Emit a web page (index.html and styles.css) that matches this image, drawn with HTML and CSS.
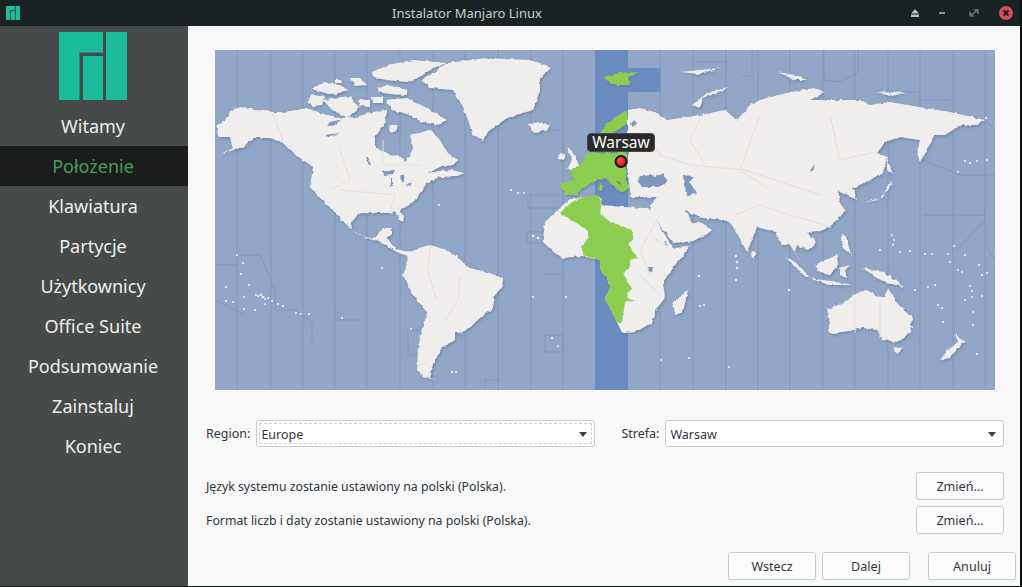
FILE: index.html
```html
<!DOCTYPE html>
<html lang="pl">
<head>
<meta charset="utf-8">
<title>Instalator Manjaro Linux</title>
<link rel="stylesheet" href="styles.css">
</head>
<body>
<div class="window">
  <header class="titlebar">
    <svg class="app-icon" viewBox="0 0 68 68"><path class="teal" d="M0 0H44V20.500H20.500V68H0ZM24 24H44V68H24ZM47 0H68V68H47Z"/></svg>
    <div class="title">Instalator Manjaro Linux</div>
    <div class="controls">
      <svg class="ctl" viewBox="0 0 24 24"><path class="eject" d="M12 8l4 4.500H8zM8 13.500h8V16H8z"/></svg>
      <svg class="ctl" viewBox="0 0 24 24"><path class="minim" d="M9 11h6v2H9z"/></svg>
      <svg class="ctl" viewBox="0 0 24 24"><path class="maxim" d="M13 9h3v3zM11 15H8v-3zM9.500 14.500l5-5" /></svg>
      <svg class="ctl" viewBox="0 0 24 24"><circle class="close-bg" cx="12" cy="12" r="7"/><path class="close-x" d="M9.500 9.500l5 5M14.500 9.500l-5 5"/></svg>
    </div>
  </header>
  <div class="body">
    <nav class="sidebar">
      <svg class="logo" viewBox="0 0 68 68"><path class="teal" d="M0 0H44V20.500H20.500V68H0ZM24 24H44V68H24ZM47 0H68V68.500H47Z"/></svg>
      <ul class="steps">
        <li class="step">Witamy</li>
        <li class="step active">Położenie</li>
        <li class="step">Klawiatura</li>
        <li class="step">Partycje</li>
        <li class="step">Użytkownicy</li>
        <li class="step">Office Suite</li>
        <li class="step">Podsumowanie</li>
        <li class="step">Zainstaluj</li>
        <li class="step">Koniec</li>
      </ul>
    </nav>
    <main class="main">
      <div class="map">
        <svg class="map-svg" viewBox="215 50 780 340">
          <defs>
            <filter id="coast" filterUnits="userSpaceOnUse" x="215" y="50" width="780" height="340">
              <feTurbulence type="fractalNoise" baseFrequency=".2" numOctaves="2" seed="4" result="n"/>
              <feDisplacementMap in="SourceGraphic" in2="n" scale="3.500" xChannelSelector="R" yChannelSelector="G" result="d"/>
              <feGaussianBlur in="d" stdDeviation=".35" result="b"/>
              <feDropShadow in="b" dx="1" dy="1.500" stdDeviation="1.500" flood-color="#5a6f92" flood-opacity=".6"/>
            </filter>
            <radialGradient id="pin" cx=".4" cy=".35" r=".7"><stop offset="0" stop-color="#ff5a50"/><stop offset="1" stop-color="#d8000c"/></radialGradient>
          </defs>
          <rect class="ocean" x="215" y="50" width="780" height="340"/>
          <path class="strip" d="M595 50H628V68H661V92H628V390H595Z"/>
          <path class="tz" d="M237 50V390M271 50V390M303 50V390M335 50V390M367 50V390M400 50V390M433 50V390M465 50V390M498 50V390M531 50V130H563M563 50V390M531 190V390M660 50V390M693 50V390M726 50V390M758 50V390M790 50V390M823 50V390M855 50V390M888 50V390M920 50V390M953 50V390M985 50V390M693 62H726V72M752 50V76H742M824 50V80L840 82L858 72V50M890 92H920M920 100H950M985 120L995 130M923 160L960 175H995M923 215H985M955 252L985 220V210M985 245L995 260M215 265H238M215 300L245 315M238 255H260L275 290V310H295L312 322V340M360 320H338V312H335M408 330H440V355H408ZM500 380H485V388M545 274H563V280M545 335H563V352H545ZM528 195H563V208H528ZM527 232H545V243H527Z"/>
          <g filter="url(#coast)">
            <path class="land" d="M216 126L225 120L232 110L241 107L255 110L273 112L283 112L297 110L307 108L320 113L340 118L357 117L373 112L387 110L385 123L375 137L375 147L390 155L403 157L405 163L410 155L413 148L410 135L430 130L440 140L448 153L458 160L453 165L440 167L427 173L440 171L452 170L465 173L457 176L440 177L427 183L417 197L413 203L400 210L403 216L404 222L399 220L396 212L388 213L378 213L368 212L358 214L352 222L352 230L360 235L375 238L383 228L392 228L392 234L387 238L393 246L400 250L408 252L408 256L397 252L382 243L367 238L352 230L340 218L327 205L310 187L313 167L293 153L283 143L270 138L253 138L243 147L232 150L217 157L233 148L230 137L218 137L217 127Z"/>
            <path class="land" d="M408 253L422 247L430 245L447 250L457 257L470 268L487 272L503 278L502 287L495 295L493 308L480 318L465 332L455 333L455 340L442 347L438 355L433 365L430 378L437 380L423 377L417 370L418 348L422 332L427 312L413 295L403 275L407 265Z"/>
            <path class="land" d="M422 80L447 63L487 58L530 60L552 67L540 78L540 90L533 110L507 118L490 130L483 140L473 135L468 120L463 107L453 90L430 88Z"/>
            <path class="land" d="M373 77L372 72L387 65L413 60L447 63L433 68L420 77L407 82L387 80ZM377 87L392 85L407 90L407 95L390 94L378 92ZM310 88L327 82L340 85L348 90L333 95L315 90ZM350 78L360 78L367 85L355 86ZM335 80L342 80L342 83L335 83ZM307 102L312 95L325 97L322 105L313 106ZM323 100L350 97L360 107L347 118L332 110ZM358 100L370 100L370 107L360 106ZM372 97L383 97L383 103L373 103ZM385 100L407 98L427 108L447 120L438 125L422 122L410 115L393 110ZM390 125L397 125L395 132L389 131ZM528 124L540 122L550 125L547 130L535 133Z"/>
            <path class="land" d="M558 210L568 200L578 198L600 197L603 205L622 207L648 208L652 212L665 235L673 248L690 247L675 265L663 282L665 298L657 308L652 323L635 332L622 333L617 322L610 308L605 298L610 288L607 278L600 270L600 260L582 256L563 258L555 253L543 242L545 222Z"/>
            <path class="land" d="M628 110L640 108L655 112L667 120L680 118L700 115L725 110L737 120L750 105L760 100L790 92L815 88L825 92L810 100L835 100L860 100L870 105L890 102L925 108L950 112L985 120L975 125L960 125L945 135L935 135L920 163L917 152L920 140L900 137L885 142L877 153L887 157L883 173L870 180L853 188L857 200L850 196L838 190L840 203L845 210L838 220L828 228L817 232L807 233L817 242L808 250L797 245L795 252L803 265L790 245L782 245L775 232L757 227L747 252L738 235L730 222L723 220L703 218L685 210L692 222L702 223L712 230L707 234L693 241L673 243L660 225L650 212L650 205L657 197L630 197L630 190L628 175L628 150Z"/>
            <path class="land" d="M827 310L843 303L857 293L867 290L875 295L885 298L888 288L897 303L912 318L910 332L898 342L883 340L877 330L863 328L833 334L828 330L830 322ZM893 347L902 348L899 353L895 352ZM955 333L965 342L958 348L950 358L940 360L948 350L958 342ZM688 290L683 312L675 315L673 303ZM752 250L756 254L754 258L751 255ZM785 257L793 260L810 277L803 275ZM808 278L830 281L853 285L830 285ZM815 265L827 259L837 255L838 265L830 275L820 272ZM840 268L850 265L845 270L847 278L840 275ZM842 233L846 237L850 250L852 255L845 250L841 240ZM863 268L883 272L905 287L887 283L875 277ZM728 87L707 93L692 105L700 108L703 98L720 92ZM778 72L790 74L807 80L795 80ZM877 92L907 93L890 96ZM887 157L892 173L887 170ZM893 180L887 187L883 197L863 203L877 200L888 190ZM680 72L720 68L700 74ZM567 147L572 150L578 163L580 167L567 170L572 160ZM559 153L565 154L564 160L558 159Z"/>
            <path class="green" d="M560 213L568 205L578 199L598 195L602 203L600 213L607 220L632 230L632 240L628 245L638 258L630 260L630 267L623 273L627 280L632 290L628 293L627 298L634 301L625 302L622 322L617 322L610 308L605 298L610 288L607 278L600 270L600 260L582 255L582 247L588 238L588 230Z"/>
            <path class="green" d="M597 137L608 122L627 110L628 123L618 130L612 133L610 152ZM572 170L583 163L587 153L625 152L627 157L626 163L627 175L626 180L630 188L623 192L620 182L612 180L607 178L598 180L583 187L577 195L565 195L560 183L575 180L568 170ZM603 77L620 73L638 72L628 78L630 85L617 85L610 83ZM600 183L603 185L602 192L599 190Z"/>
            <path class="green" d="M607 178L616 181L625 190L621 192L612 185Z"/>
            <path class="water" d="M640 176L650 174L655 178L663 173L668 183L658 187L643 187L638 182ZM683 175L693 176L690 183L697 193L688 196L684 185ZM810 170L815 165L813 171ZM649 267L653 267L652 272L648 271ZM630 123L634 121L637 124L632 127ZM382 172L395 170L393 174L384 175ZM391 178L393 178L393 186L391 186ZM400 175L404 176L404 182L401 181ZM405 185L413 182L412 184L406 187ZM330 122L340 120L335 125L327 126ZM325 135L340 133L328 137ZM366 157L368 157L371 165L369 165ZM664 240L668 246L666 246Z"/>
          </g>
          <path class="border" d="M273 114L283 141M340 150L350 180L330 190M383 140L383 165L420 165M340 190L395 195L390 212M430 247L428 270L436 300M460 275L458 300L445 320M645 130L660 155L690 165L745 170L790 185L820 195M700 118L690 140L708 170M760 115L740 170L770 190M830 115L840 160L875 152M828 226L790 215L760 205L735 215M650 235L668 248M640 275L660 295M855 297V333M880 300V338M660 215L640 250L650 275"/>
          <g class="dots">
            <circle cx="237" cy="255" r="1"/><circle cx="241" cy="274" r="1"/><circle cx="243" cy="263" r="1"/><circle cx="249" cy="285" r="1"/><circle cx="226" cy="287" r="1"/><circle cx="226" cy="301" r="1"/><circle cx="233" cy="302" r="1"/><circle cx="244" cy="297" r="1"/><circle cx="256" cy="295" r="1"/><circle cx="258" cy="296" r="1"/><circle cx="261" cy="295" r="1.300"/><circle cx="263" cy="297" r="1.300"/><circle cx="265" cy="299" r="1"/><circle cx="268" cy="298" r="1"/><circle cx="272" cy="301" r="1"/><circle cx="278" cy="304" r="1"/><circle cx="283" cy="306" r="1"/><circle cx="265" cy="304" r="1"/><circle cx="255" cy="310" r="1"/><circle cx="244" cy="309" r="1"/><circle cx="296" cy="313" r="1"/><circle cx="301" cy="314" r="1"/><circle cx="309" cy="314" r="1"/><circle cx="342" cy="318" r="1"/><circle cx="382" cy="268" r="1"/><circle cx="411" cy="329" r="1"/><circle cx="452" cy="372" r="1.200"/><circle cx="456" cy="372" r="1"/><circle cx="552" cy="338" r="1"/><circle cx="558" cy="346" r="1"/><circle cx="533" cy="297" r="1"/><circle cx="566" cy="297" r="1"/><circle cx="533" cy="236" r="1.300"/><circle cx="538" cy="238" r="1.300"/><circle cx="511" cy="190" r="1"/><circle cx="518" cy="193" r="1"/><circle cx="524" cy="193" r="1"/><circle cx="439" cy="205" r="1"/><circle cx="658" cy="238" r="1"/><circle cx="699" cy="276" r="1.300"/><circle cx="704" cy="305" r="1"/><circle cx="700" cy="306" r="1"/><circle cx="736" cy="256" r="1.200"/><circle cx="737" cy="262" r="1.200"/><circle cx="737" cy="268" r="1.200"/><circle cx="736" cy="280" r="1.200"/><circle cx="789" cy="290" r="1.200"/><circle cx="661" cy="360" r="1"/><circle cx="689" cy="358" r="1"/><circle cx="729" cy="367" r="1"/><circle cx="892" cy="235" r="1"/><circle cx="894" cy="240" r="1"/><circle cx="893" cy="245" r="1"/><circle cx="880" cy="250" r="1"/><circle cx="900" cy="252" r="1"/><circle cx="910" cy="251" r="1"/><circle cx="925" cy="254" r="1"/><circle cx="932" cy="254" r="1"/><circle cx="948" cy="254" r="1"/><circle cx="954" cy="246" r="1"/><circle cx="965" cy="255" r="1"/><circle cx="950" cy="262" r="1"/><circle cx="958" cy="270" r="1"/><circle cx="962" cy="272" r="1"/><circle cx="979" cy="265" r="1"/><circle cx="982" cy="275" r="1"/><circle cx="987" cy="273" r="1"/><circle cx="970" cy="286" r="1"/><circle cx="972" cy="291" r="1"/><circle cx="965" cy="300" r="1"/><circle cx="972" cy="297" r="1"/><circle cx="982" cy="296" r="1"/><circle cx="973" cy="312" r="1"/><circle cx="912" cy="327" r="1"/><circle cx="943" cy="322" r="1"/><circle cx="973" cy="325" r="1"/><circle cx="977" cy="354" r="1"/><circle cx="938" cy="305" r="1"/><circle cx="942" cy="308" r="1"/><circle cx="915" cy="290" r="1"/><circle cx="928" cy="287" r="1"/><circle cx="935" cy="285" r="1"/><circle cx="958" cy="172" r="1"/><circle cx="965" cy="161" r="1"/><circle cx="970" cy="163" r="1"/><circle cx="977" cy="161" r="1"/><circle cx="987" cy="160" r="1"/><circle cx="986" cy="118" r="1"/>
          </g>
          <circle class="pin" cx="621" cy="161.500" r="5.500"/>
        </svg>
        <div class="tooltip">Warsaw</div>
      </div>
      <div class="zones">
        <div class="zone">
          <span class="label">Region:</span>
          <div class="combo focused"><div class="combo-focus"><span>Europe</span><span class="arrow"></span></div></div>
        </div>
        <div class="zone">
          <span class="label">Strefa:</span>
          <div class="combo"><span>Warsaw</span><span class="arrow"></span></div>
        </div>
      </div>
      <div class="locale-rows">
        <div class="locale-row"><span class="label">Język systemu zostanie ustawiony na polski (Polska).</span><button class="btn">Zmień...</button></div>
        <div class="locale-row"><span class="label">Format liczb i daty zostanie ustawiony na polski (Polska).</span><button class="btn">Zmień...</button></div>
      </div>
      <footer class="footer">
        <button class="btn">Wstecz</button>
        <button class="btn">Dalej</button>
        <button class="btn cancel">Anuluj</button>
      </footer>
    </main>
  </div>
</div>
</body>
</html>
```
FILE: styles.css
```css
* { box-sizing: border-box; }
html, body { margin: 0; height: 100%; background: #1b2224; overflow: hidden; }
body { font-family: "Noto Sans", sans-serif; }
.window { width: 1022px; height: 587px; display: flex; flex-direction: column; border-right: 2px solid #0d0f10; border-bottom: 1px solid #14191a; }
.titlebar { height: 26px; flex: none; display: flex; align-items: center; background: #1b2224; color: #c9cdcd; font-size: 13px; }
.app-icon { width: 14px; height: 14px; margin-left: 6px; margin-right: 6px; flex: none; }
.title { flex: 1; text-align: center; font-size: 13px; }
.controls { flex: none; display: flex; width: 112px; }
.ctl { width: 24px; height: 24px; flex: none; margin-right: 8px; }
.ctl:first-child { margin-left: -5px; margin-right: 3px; }
.eject { fill: #b4c2bf; }
.minim { fill: #8a9292; }
.maxim { fill: #6b7070; stroke: #6b7070; stroke-width: 1.500; }
.close-bg { fill: #cf4f5b; }
.close-x { stroke: #2a1c20; stroke-width: 2; fill: none; }
.teal { fill: #1abc9c; }
.body { flex: 1; display: flex; min-height: 0; }
.sidebar { width: 188px; flex: none; background: #464a49; display: flex; flex-direction: column; align-items: center; padding-top: 6px; }
.logo { width: 68px; height: 68px; flex: none; margin-bottom: 6px; margin-left: -2px; }
.steps { list-style: none; margin: 0; padding: 0; width: 100%; }
.step { height: 40px; display: flex; align-items: center; justify-content: center; color: #eeeeee; font-size: 18px; padding-right: 2px; }
.step.active { background: #1b1d1d; color: #4b9a60; }
.main { flex: 1; min-width: 0; background: #f8f8f8; color: #31363b; font-size: 12.300px; padding-top: 24px; display: flex; flex-direction: column; }
.map { position: relative; width: 780px; height: 340px; margin-left: 27px; flex: none; }
.map-svg { display: block; width: 780px; height: 340px; }
.ocean { fill: #92a7c7; }
.strip { fill: #6b8cc1; }
.tz { fill: none; stroke: #8297b9; stroke-width: 1; }
.land { fill: #f0eded; }
.green { fill: #8acd50; }
.border { fill: none; stroke: #e2dedb; stroke-width: 1; }
.water { fill: #7f97bd; }
.dots circle { fill: #eef0f2; }
.pin { fill: url(#pin); stroke: #111; stroke-width: 1.800; }
.tooltip { position: absolute; left: 372px; top: 83px; width: 68px; height: 19px; background: #2a2a2a; border: 1px solid #4a4a4a; border-radius: 4px; color: #fff; font-size: 15.500px; line-height: 17px; text-align: center; }
.zones { display: flex; gap: 26px; margin-top: 30px; padding-left: 18px; font-size: 12.500px; }
.zone { display: flex; align-items: center; gap: 6px; }
.label { white-space: nowrap; }
.combo { width: 339px; height: 27px; background: #fff; border: 1px solid #c8cbcc; border-radius: 3px; display: flex; align-items: center; justify-content: space-between; padding: 1px 7px 0 4px; }
.combo.focused { padding: 2px; }
.combo-focus { flex: 1; align-self: stretch; display: flex; align-items: center; justify-content: space-between; border: 1px dashed #cfcfcf; padding: 1px 4px 0 1px; }
.arrow { width: 0; height: 0; border-left: 4.500px solid transparent; border-right: 4.500px solid transparent; border-top: 5px solid #3c4144; flex: none; }
.locale-rows { display: flex; flex-direction: column; gap: 6px; margin-top: 25px; padding: 0 16px 0 18px; }
.locale-row { display: flex; align-items: center; justify-content: space-between; }
.btn { width: 88px; height: 28px; padding: 0; background: #fcfcfc; border: 1px solid #c8cbcc; border-radius: 3px; color: #31363b; font-family: inherit; font-size: 12.600px; }
.footer { display: flex; justify-content: flex-end; gap: 6px; margin-top: 18px; padding-right: 4px; }
.cancel { margin-left: 12px; }
```
